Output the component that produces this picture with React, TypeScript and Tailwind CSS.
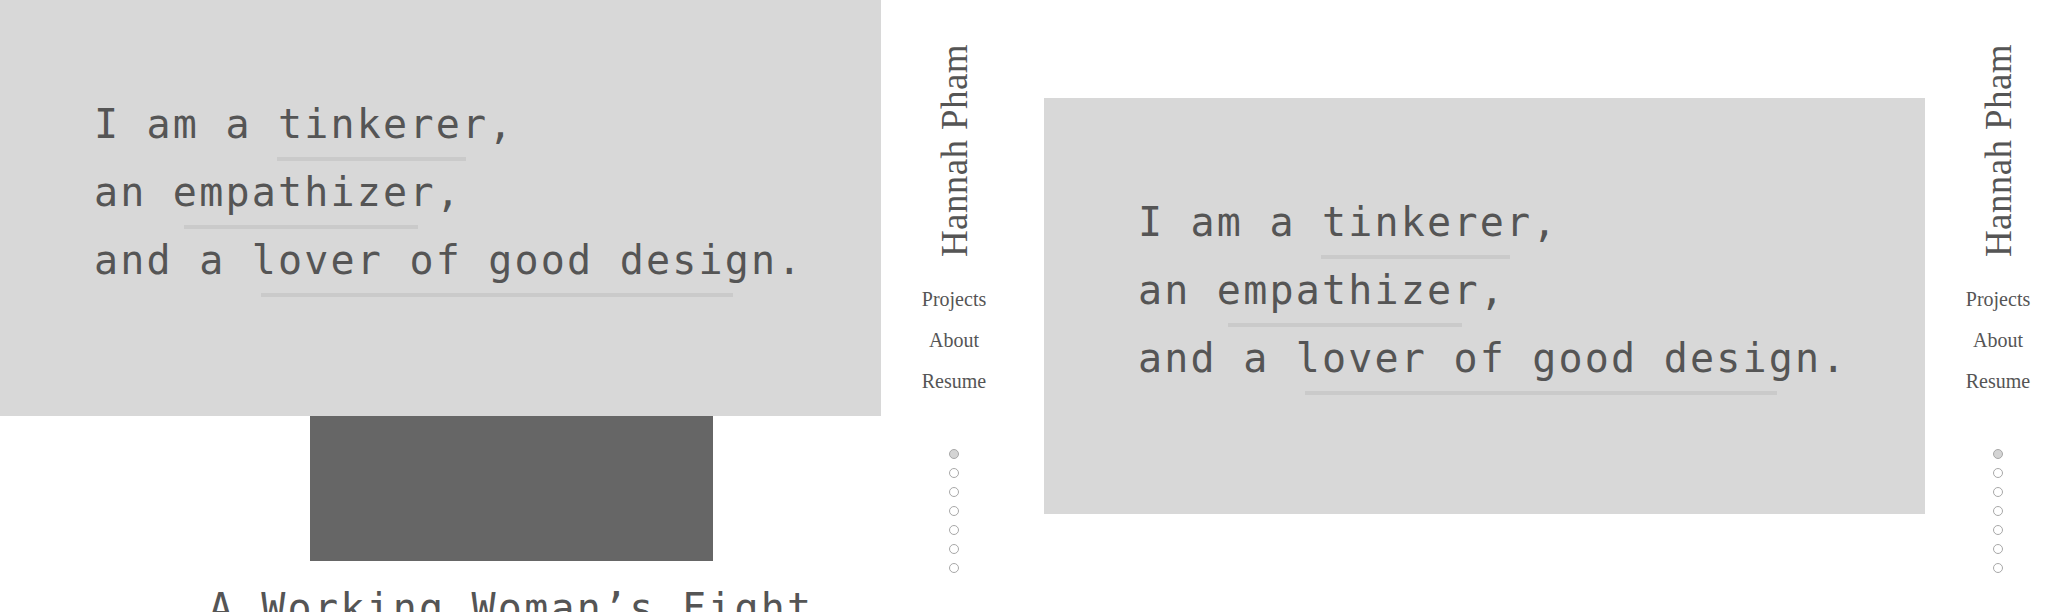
const mono = "font-['DejaVu_Sans_Mono',monospace]";
const serif = "font-['Liberation_Serif',serif]";

const lines = [
  { text: "I am a tinkerer,", line: "left-[183px] w-[189px]" },
  { text: "an empathizer,", line: "left-[90px] w-[234px]" },
  { text: "and a lover of good design.", line: "left-[167px] w-[472px]" },
];

const Hero = () => (
  <div className="h-[416px] w-[881px] shrink-0 bg-[#d8d8d8] pl-[94px] pt-[90px]">
    {lines.map((l) => (
      <div
        key={l.text}
        className={`relative h-[68px] whitespace-pre text-[40px] leading-[68px] tracking-[2.2px] text-[#555] ${mono}`}
      >
        {l.text}
        <span className={`absolute top-[67px] h-[4px] bg-[#cacaca] ${l.line}`} />
      </div>
    ))}
  </div>
);

const Sidebar = () => (
  <div className={`flex w-[146px] shrink-0 flex-col items-center pt-[43px] text-[#555] ${serif}`}>
    <div className="h-[214px] rotate-180 text-[37px] leading-[37px] tracking-[0.4px] [writing-mode:vertical-rl]">
      Hannah Pham
    </div>
    <nav className="mt-[22px] flex flex-col items-center text-[20px] leading-[41px]">
      <a className="cursor-pointer">Projects</a>
      <a className="cursor-pointer">About</a>
      <a className="cursor-pointer">Resume</a>
    </nav>
    <div className="mt-[47px] flex flex-col items-center gap-[9px]">
      {[0, 1, 2, 3, 4, 5, 6].map((i) => (
        <span
          key={i}
          className={`size-[10px] rounded-full border border-[#a8a8a8] ${i === 0 ? "bg-[#d4d4d4]" : "bg-white"}`}
        />
      ))}
    </div>
  </div>
);

const Project = () => (
  <section className="flex w-[881px] flex-col items-center pl-[141px]">
    <div className="h-[145px] w-[403px] bg-[#666]" />
    <h2
      className={`mt-[27px] whitespace-nowrap text-[40px] leading-[40px] tracking-[2.2px] text-[#555] ${mono}`}
    >
      A Working Woman’s Fight
    </h2>
  </section>
);

export default function App() {
  return (
    <div className="flex h-[612px] w-[2068px] overflow-hidden bg-white">
      <div className="flex w-[1044px] shrink-0">
        <main className="flex w-[881px] shrink-0 flex-col">
          <Hero />
          <Project />
        </main>
        <Sidebar />
      </div>
      <div className="flex w-[1024px] shrink-0">
        <main className="flex w-[881px] shrink-0 flex-col pt-[98px]">
          <Hero />
        </main>
        <Sidebar />
      </div>
    </div>
  );
}
